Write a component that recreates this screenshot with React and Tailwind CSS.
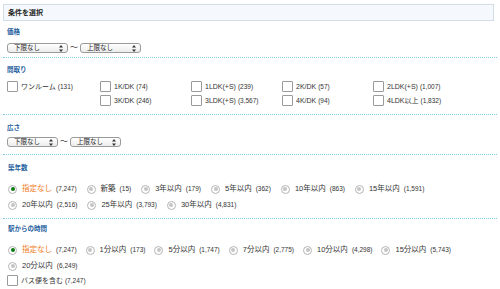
import React from 'react';

const font = { fontFamily: '"Liberation Sans", "Noto Sans CJK JP", sans-serif' };

function Heading({ children }) {
  return <div className="text-[6.5px] font-bold text-[#1f5f9e] leading-[10px]">{children}</div>;
}

function Divider() {
  return <div className="border-t border-dotted border-[#7fcde3]" />;
}

function SelectBox({ label, w }) {
  return (
    <div
      className={`${w} h-[10px] flex items-center justify-between rounded-[3px] border border-[#9a9a9a] bg-gradient-to-b from-white to-[#ececec] pl-[6px] pr-[4px] text-[6.5px] text-[#222] leading-none`}
    >
      <span>{label}</span>
      <svg width="4" height="7" viewBox="0 0 4 7">
        <path d="M2 0 L4 2.6 L0 2.6 Z M2 7 L4 4.4 L0 4.4 Z" fill="#333" />
      </svg>
    </div>
  );
}

function Range({ w }) {
  return (
    <div className="flex items-center gap-[2px]">
      <SelectBox label="下限なし" w={w} />
      <span className="text-[8px] text-[#444] leading-none">〜</span>
      <SelectBox label="上限なし" w={w} />
    </div>
  );
}

function Check({ label, count }) {
  return (
    <div className="flex items-center gap-[3px] h-[11px]">
      <span className="w-[11px] h-[11px] shrink-0 border border-[#9a9a9a] bg-white rounded-[1px]" />
      <span className="text-[7px] text-[#333] leading-none whitespace-nowrap">
        {label} <span className="text-[6.5px]">{count}</span>
      </span>
    </div>
  );
}

function Radio({ label, count, on }) {
  return (
    <div className="flex items-center gap-[5px] h-[10px]">
      <span className="w-[9px] h-[9px] shrink-0 rounded-full border border-[#b5b5b5] bg-white flex items-center justify-center">
        <span className={`w-[4px] h-[4px] rounded-full ${on ? 'bg-[#0e7a12]' : 'bg-[#c4c4c4]'}`} />
      </span>
      <span className="text-[7.5px] leading-none whitespace-nowrap">
        <span className={on ? 'text-[#f07a22]' : 'text-[#333]'}>{label}</span>
        <span className="text-[6.5px] text-[#333] ml-[4px]">{count}</span>
      </span>
    </div>
  );
}

const years = [
  ['指定なし', '(7,247)', true],
  ['新築', '(15)'],
  ['3年以内', '(179)'],
  ['5年以内', '(362)'],
  ['10年以内', '(863)'],
  ['15年以内', '(1,591)'],
  ['20年以内', '(2,516)'],
  ['25年以内', '(3,793)'],
  ['30年以内', '(4,831)'],
];

const walks = [
  ['指定なし', '(7,247)', true],
  ['1分以内', '(173)'],
  ['5分以内', '(1,747)'],
  ['7分以内', '(2,775)'],
  ['10分以内', '(4,298)'],
  ['15分以内', '(5,743)'],
  ['20分以内', '(6,249)'],
];

export default function App() {
  return (
    <div className="w-[500px] h-[289px] bg-white overflow-hidden px-[3px] pt-[4px]" style={font}>
      <div className="w-[491px] h-[17px] border border-[#d3dde6] bg-[#f5f9fd] flex items-center pl-[4px]">
        <span className="text-[7px] font-bold text-[#222] leading-none">条件を選択</span>
      </div>

      <div className="pl-[4px] pt-[6px]">
        <Heading>価格</Heading>
        <div className="mt-[6px] mb-[4px]">
          <Range w="w-[61px]" />
        </div>
      </div>
      <Divider />

      <div className="pl-[4px] pt-[7px] pb-[8px]">
        <Heading>間取り</Heading>
        <div className="mt-[6px] grid grid-cols-[93px_91px_91px_91px_91px] gap-y-[3px]">
          <Check label="ワンルーム" count="(131)" />
          <Check label="1K/DK" count="(74)" />
          <Check label="1LDK(+S)" count="(239)" />
          <Check label="2K/DK" count="(57)" />
          <Check label="2LDK(+S)" count="(1,007)" />
          <div />
          <Check label="3K/DK" count="(246)" />
          <Check label="3LDK(+S)" count="(3,567)" />
          <Check label="4K/DK" count="(94)" />
          <Check label="4LDK以上" count="(1,832)" />
        </div>
      </div>
      <Divider />

      <div className="pl-[4px] pt-[8px] pb-[7px]">
        <Heading>広さ</Heading>
        <div className="mt-[4px]">
          <Range w="w-[51px]" />
        </div>
      </div>
      <Divider />

      <div className="pl-[5px] pt-[8px] pb-[8px]">
        <Heading>築年数</Heading>
        <div className="mt-[11px] flex flex-wrap gap-x-[10px] gap-y-[6px] w-[488px]">
          {years.map(([l, c, on]) => (
            <Radio key={l} label={l} count={c} on={on} />
          ))}
        </div>
      </div>
      <Divider />

      <div className="pl-[5px] pt-[5px]">
        <Heading>駅からの時間</Heading>
        <div className="mt-[11px] flex flex-wrap gap-x-[9px] gap-y-[6px] w-[488px]">
          {walks.map(([l, c, on]) => (
            <Radio key={l} label={l} count={c} on={on} />
          ))}
        </div>
        <div className="mt-[4px] -ml-[1px]">
          <Check label="バス便を含む" count="(7,247)" />
        </div>
      </div>
    </div>
  );
}
